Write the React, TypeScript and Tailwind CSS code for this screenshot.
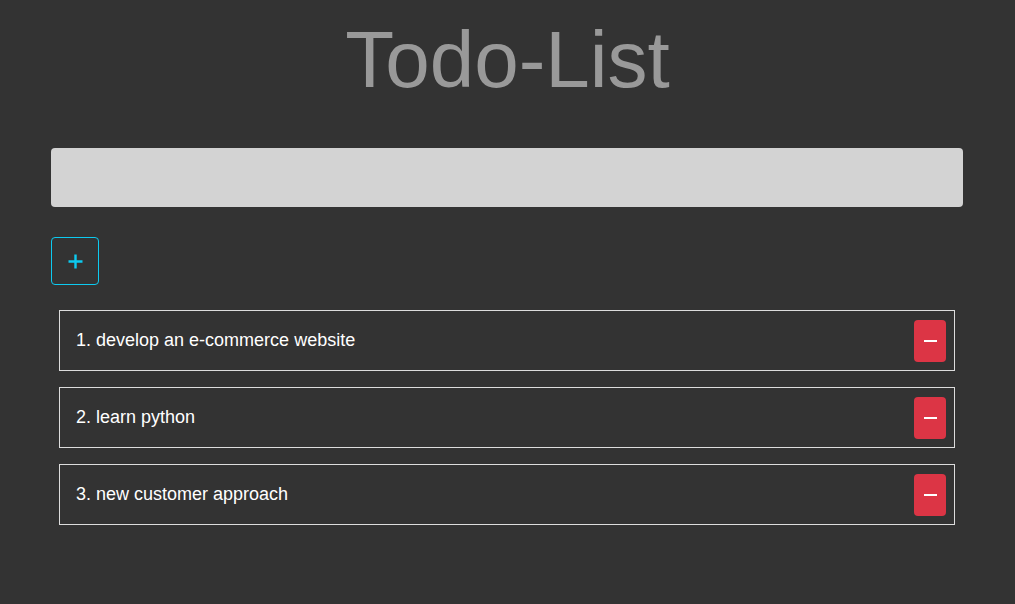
import React from 'react';

const todos = ['develop an e-commerce website', 'learn python', 'new customer approach'];

const App: React.FC = () => {
  return (
    <div className="min-h-[604px] w-full bg-[#333333] font-['Liberation_Sans',Arial,sans-serif]">
      <h1 className="pt-[14px] text-center text-[80px] leading-[92px] font-normal text-[#999999]">Todo-List</h1>
      <div className="pt-[42px] pr-[52px] pl-[51px]">
        <input className="block h-[59px] w-full rounded-[4px] bg-[#d3d3d3] outline-none" />
        <button className="mt-[30px] flex h-[48px] w-[48px] items-center justify-center rounded-[4px] border border-[#0dcaf0] text-[#0dcaf0]">
          <svg width="15" height="15" viewBox="0 0 15 15">
            <path d="M7.5 0.5v14M0.5 7.5h14" stroke="currentColor" strokeWidth="2.4" />
          </svg>
        </button>
      </div>
      <ul className="mt-[25px] flex flex-col gap-[16px] pr-[60px] pl-[59px]">
        {todos.map((t, i) => (
          <li key={t} className="flex h-[61px] items-center justify-between border border-[#dddddd] pr-[8px] pl-[16px]">
            <span className="text-[18px] text-white">{i + 1}. {t}</span>
            <button className="flex h-[42px] w-[32px] items-center justify-center rounded-[4px] bg-[#dc3545]">
              <span className="block h-[2px] w-[13px] bg-white" />
            </button>
          </li>
        ))}
      </ul>
    </div>
  );
};

export default App;
